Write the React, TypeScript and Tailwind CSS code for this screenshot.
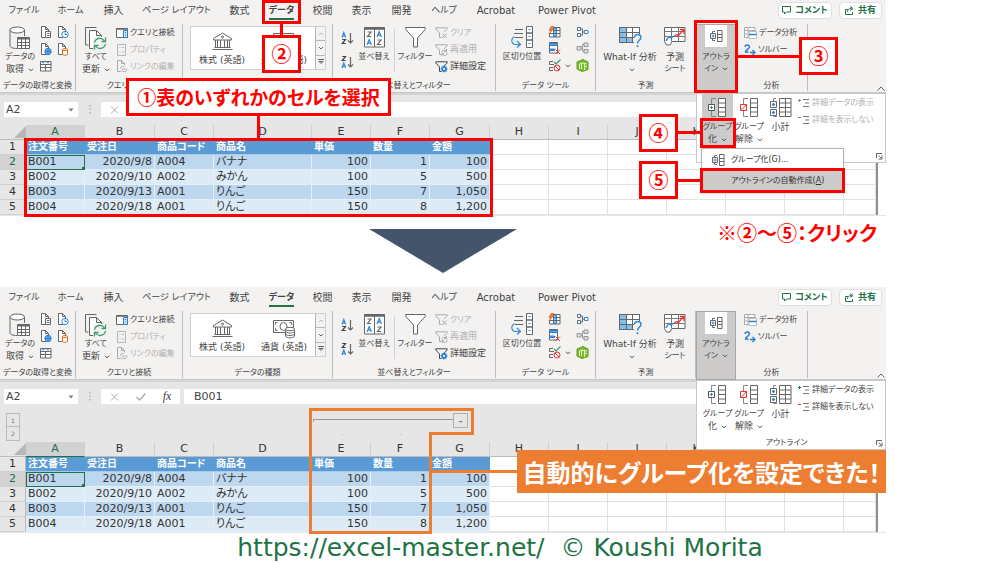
import type { ReactNode } from "react"

const tabs = [
  { label: "ファイル", width: "w-[48px]" },
  { label: "ホーム", width: "w-[45px]" },
  { label: "挿入", width: "w-[41px]" },
  { label: "ページ レイアウト", width: "w-[85px]" },
  { label: "数式", width: "w-[41px]" },
  { label: "データ", width: "w-[43px]", active: true },
  { label: "校閲", width: "w-[39px]" },
  { label: "表示", width: "w-[39px]" },
  { label: "開発", width: "w-[41px]" },
  { label: "ヘルプ", width: "w-[44px]" },
  { label: "Acrobat", width: "w-[60px]" },
  { label: "Power Pivot", width: "w-[82px]" },
]

const columns = ["A", "B", "C", "D", "E", "F", "G", "H", "I", "J", "K", "L", "M", ""]

const headings = ["注文番号", "受注日", "商品コード", "商品名", "単価", "数量", "金額"]

const orders = [
  ["B001", "2020/9/8", "A004", "バナナ", "100", "1", "100"],
  ["B002", "2020/9/10", "A002", "みかん", "100", "5", "500"],
  ["B003", "2020/9/13", "A001", "りんご", "150", "7", "1,050"],
  ["B004", "2020/9/18", "A001", "りんご", "150", "8", "1,200"],
]

const rightAligned = [1, 4, 5, 6]

// kana labels are set one size smaller than kanji ones
const hasKana = (text: string) => /[ぁ-んァ-ヶ]/.test(text)

/* ---------- icons ---------- */

function Svg({ w, h, children }: { w: number; h: number; children: ReactNode }) {
  return (
    <svg width={w} height={h} viewBox={`0 0 ${w} ${h}`} fill="none" stroke="#666" strokeWidth="1" className="block shrink-0" aria-hidden="true">
      {children}
    </svg>
  )
}

function Chevron() {
  return (
    <svg width="6" height="4" viewBox="0 0 6 4" fill="none" stroke="#444" className="ml-1 inline-block align-middle" aria-hidden="true">
      <path d="M1 .8 3 2.8 5 .8" />
    </svg>
  )
}

function DatabaseIcon() {
  return (
    <Svg w={22} h={25}>
      <path d="M1 4v16c0 1.500 3 2.500 7 2.500M15.500 4v6" />
      <ellipse cx="8.200" cy="4" rx="7.300" ry="3" fill="#fff" />
      <path d="M8.500 11.500h12v11h-12z" fill="#fff" />
      <path d="M8.500 12.500h12" strokeWidth="2" />
      <path d="M8.500 16.500h12M8.500 19.500h12M12.500 13v10M16.500 13v10" />
    </Svg>
  )
}

function PageIcon({ kind }: { kind: "text" | "clock" | "web" | "db" }) {
  return (
    <Svg w={12} h={13}>
      <path d="M6 11.500H1.500V.5h4l3 3V6M5.500.5v3h3" fill="#fff" />
      {kind === "text" && (
        <>
          <path d="M5.500 5.500h5v6h-5z" fill="#fff" />
          <path d="M7 7.500h2.500M7 9.500h2.500" />
        </>
      )}
      {kind === "clock" && (
        <g stroke="#2b88d8">
          <circle cx="8" cy="8.500" r="3.200" fill="#fff" />
          <path d="M8 6.500v2h2" />
        </g>
      )}
      {kind === "web" && (
        <g stroke="#2b7cd3">
          <circle cx="8" cy="8.500" r="3.200" fill="#71afe5" />
          <path d="M5 8.500h6M8 5.500v6" />
        </g>
      )}
      {kind === "db" && (
        <g stroke="#e8681a">
          <path d="M5.500 6.500v5c1 1 4 1 5 0v-5" fill="#fff" />
          <ellipse cx="8" cy="6.500" rx="2.500" ry="1" fill="#fff" />
        </g>
      )}
    </Svg>
  )
}

function TableIcon() {
  return (
    <Svg w={12} h={12}>
      <path d="M.5 1.500h10.500v9.500H.5z" fill="#fff" />
      <path d="M.5 4.500H11M.5 7.500H11M5.500 4v7" />
      <path d="M2 2.500h2.500M6.500 2.500H9" stroke="#41a5ee" strokeWidth="1.500" />
    </Svg>
  )
}

function RefreshAllIcon() {
  return (
    <Svg w={22} h={25}>
      <path d="M3.500 19H.5V1.500h11" />
      <path d="M8 22.500H4.500v-18h7l5 5V12M11.500 4.500v5h5" fill="#fff" />
      <path d="M8 11h13v13H8z" fill="#f3f2f1" stroke="none" />
      <path d="M9.500 16.500a5.500 5.500 0 0 1 10-1.500M20.500 18a5.500 5.500 0 0 1-10 2" stroke="#3a9b6b" strokeWidth="1.300" />
      <path d="M20.500 11.500v4h-4M9.500 23.500v-4h4" stroke="#3a9b6b" strokeWidth="1.300" />
    </Svg>
  )
}

function QueryIcon() {
  return (
    <Svg w={12} h={12}>
      <path d="M.5 1.500h11v9H.5z" fill="#fff" />
      <path d="M.5 2h11" strokeWidth="1.500" />
      <path d="M7.500 3.500h4v7h-4z" fill="#cfe6f9" stroke="#2b7cd3" />
      <path d="M9 5.500h1M9 8h1" stroke="#2b7cd3" />
    </Svg>
  )
}

function PropertyIcon() {
  return (
    <Svg w={12} h={12}>
      <path d="M1.500.5h8v11h-8zM3.500 3.500h1M3.500 8h1M6 3.500h2M6 8h2" stroke="#b5b5b5" />
    </Svg>
  )
}

function LinkIcon() {
  return (
    <Svg w={12} h={13}>
      <g stroke="#aaa">
        <path d="M4 11.500H1.500V.5h4l3 3v2M5.500.5v3h3" />
        <path d="M4.500 8.500a2 2 0 0 1 2-2h1M10.500 8.500a2 2 0 0 1-2 3h-2M6 9h3.500M4.500 12l1-1.500" />
      </g>
    </Svg>
  )
}

function BankIcon() {
  return (
    <Svg w={21} h={19}>
      <path d="M1.500 6.500 10.500 1l9 5.500v1.500h-18z" fill="#fff" />
      <circle cx="10.500" cy="5" r="1" />
      <path d="M3.500 8v7M5.500 8v7M8.500 8v7M12.500 8v7M15.500 8v7M17.500 8v7M2.500 15.500h16M.5 17.500h20" />
    </Svg>
  )
}

function MoneyIcon() {
  return (
    <Svg w={23} h={20}>
      <path d="M.5 1.500h20v12H.5z" fill="#fff" />
      <path d="M2.500 5.500v-2h2M16.500 3.500h2v2M2.500 9.500v2h2" />
      <ellipse cx="10.500" cy="7.500" rx="3.500" ry="4" />
      <path d="M12.500 10v7c1 2.500 8 2.500 9 0v-7" fill="#fff" />
      <ellipse cx="17" cy="10" rx="4.500" ry="1.700" fill="#fff" />
      <path d="M12.500 12.500c1 2 8 2 9 0M12.500 15c1 2 8 2 9 0" />
    </Svg>
  )
}

function SortIcon({ desc = false }: { desc?: boolean }) {
  return (
    <Svg w={13} h={14}>
      {desc ? (
        <>
          <path d="M1.200 1.500h3.300l-3.300 4h3.500" stroke="#444" strokeWidth="1.200" />
          <path d="M1 13 2.800 8 4.600 13M1.500 11.500h2.600" stroke="#2b88d8" strokeWidth="1.200" />
        </>
      ) : (
        <>
          <path d="M1 6.500 2.800 1.500 4.600 6.500M1.500 5h2.600" stroke="#2b88d8" strokeWidth="1.200" />
          <path d="M1.200 8.500h3.300l-3.300 4h3.500" stroke="#444" strokeWidth="1.200" />
        </>
      )}
      <path d="M9.500 2v10M7 9.500 9.500 12 12 9.500" strokeWidth="1.200" />
    </Svg>
  )
}

function SortDialogIcon() {
  return (
    <Svg w={21} h={22}>
      <path d="M.5 1.500h20v19.500H.5z" fill="#fff" />
      <path d="M.5 2.500h20" strokeWidth="2.500" />
      <path d="M10.500 3v18" />
      <path d="M3.500 6h3.500l-3.500 4.500H7M13.500 14H17l-3.500 4.500H17" strokeWidth="1.200" />
      <path d="m3 19 2.200-5.500L7.400 19M4 17.200h2.500M13 11l2.200-5.500L17.400 11M14 9.200h2.500" stroke="#2b88d8" strokeWidth="1.200" />
    </Svg>
  )
}

function FilterIcon() {
  return (
    <Svg w={21} h={22}>
      <path d="M.8 1.500h19.400v2l-7.700 8.500v9h-4v-9L.8 3.500z" fill="#fff" />
    </Svg>
  )
}

function SmallFilterIcon({ kind }: { kind: "clear" | "again" | "advanced" }) {
  const color = kind === "advanced" ? "#444" : "#aaa"
  return (
    <Svg w={13} h={12}>
      <path d="M6.500 10.500h-2V6L.8 2V.8h11.400V2L9 5" stroke={color} />
      {kind === "clear" && <path d="m7.500 6.500 4 4.500M11.500 6.500l-4 4.500" stroke="#aaa" />}
      {kind === "again" && <path d="M7 8.500a2.300 2.300 0 0 1 4-1.500M12 8.500a2.300 2.300 0 0 1-4.500 1.200M11.500 5v2.500H9M7 12V9.500h2" stroke="#aaa" />}
      {kind === "advanced" && (
        <g stroke="#2b7cd3">
          <circle cx="9" cy="8" r="2" fill="#fff" strokeWidth="1.800" />
          <path d="M9 4.500v1.200M9 10.300v1.200M5.500 8h1.200M11.300 8h1.200M6.600 5.600l.8.8M10.600 9.600l.8.8M11.400 5.600l-.8.8M7.400 9.600l-.8.8" />
        </g>
      )}
    </Svg>
  )
}

function TextToColumnsIcon() {
  return (
    <Svg w={23} h={22}>
      <path d="M4 3.500h8M3 7.500h9M4 11.500h8" />
      <path d="M15.500.5h6v6.500h-6zM15.500 7h6v7h-6zM15.500 14h6v7.500h-6z" fill="#fff" />
      <path d="M17.500 3.500h2M17.500 10.500h2M17.500 17.500h2" stroke="#2b88d8" />
      <path d="M3.500 10.500C-1 13 .5 18.500 5 18.500h4M6 15 9.500 18.500 6 21.500" stroke="#2b88d8" strokeWidth="1.200" />
    </Svg>
  )
}

function FlashFillIcon() {
  return (
    <Svg w={13} h={12}>
      <path d="M4.500 1.500h7.500v9.500H1.500V7" fill="#fff" />
      <path d="M5.500 2h3v8.500h-3z" fill="#83beec" stroke="#2b7cd3" />
      <path d="M1.500 7.500h10.500M5 4.500h7" />
      <path d="M3 .5 1 4.500h2L1 8l4.500-5H3.800L6 .5z" fill="#f5821f" stroke="#d8581c" strokeWidth=".6" />
    </Svg>
  )
}

function DuplicatesIcon() {
  return (
    <Svg w={13} h={13}>
      <path d="M1.500.5h8v10.500h-8z" fill="#fff" />
      <path d="M1.500 1.500h8v2h-8zM1.500 7h5v1.500h-5z" fill="#5ea9e6" stroke="#2b7cd3" />
      <path d="m7.500 7.500 4.500 4.500M12 7.500 7.500 12" stroke="#e33" />
    </Svg>
  )
}

function ValidationIcon() {
  return (
    <Svg w={13} h={13}>
      <path d="M5 2.500H1.500v3H6M5 8.500H1.500v3H5" />
      <path d="m6 3 2 2 4.500-4.500" stroke="#3a9b6b" strokeWidth="1.200" />
      <circle cx="9" cy="9" r="3" stroke="#e33" fill="#fff" />
      <path d="m7 7 4 4" stroke="#e33" />
    </Svg>
  )
}

function ConsolidateIcon() {
  return (
    <Svg w={13} h={12}>
      <path d="M1.500 1.500h3v3h-3zM1.500 7.500h3v3h-3z" fill="#fff" />
      <path d="M4.500 3H6.500v6h-2M6.500 6h2" />
      <path d="M8.500 4.500h3.500v3H8.500z" fill="#fff" stroke="#2b88d8" />
      <path d="M1 1.500h4M1 10.500h4" stroke="#2b88d8" />
    </Svg>
  )
}

function RelationIcon() {
  return (
    <Svg w={13} h={12}>
      <g stroke="#999" fill="#ddd">
        <path d="M1 4.500h4v3.500H1zM8 1h4v3.500H8zM8 7.500h4V11H8z" />
        <path d="M5 6h1.500V2.500H8M6.500 6v3H8" fill="none" />
      </g>
    </Svg>
  )
}

function DataModelIcon() {
  return (
    <Svg w={13} h={13}>
      <path d="m1 3 6-2.500L12 3v7.500L6 12.500 1 10z" fill="#7dbb2d" stroke="#5e9b1b" />
      <path d="M3.500 10V5l2-1v6M8.500 4v7M6 4l5 1M8.500 7.500H11" stroke="#e4f2d0" />
    </Svg>
  )
}

function WhatIfIcon() {
  return (
    <Svg w={23} h={22}>
      <path d="M.5 1.500h20v15H.5z" fill="#fff" />
      <path d="M1 2h6v14.500H1zM7.500 11.500h6v5h-6z" fill="#83beec" stroke="none" />
      <path d="M.5 1.500h20v15H.5zM.5 6.500h20M.5 11.500h20M7.500 1.500v15M13.500 1.500v15" />
      <path d="M15 8h8v14h-8z" fill="#f3f2f1" stroke="none" />
      <path d="M15.500 11.500c0-4 6.500-4 6.500 0 0 3-3.500 2.500-3.500 6" stroke="#2b88d8" strokeWidth="1.400" />
      <circle cx="18.500" cy="20.300" r="1" fill="#2b88d8" stroke="none" />
    </Svg>
  )
}

function ForecastIcon() {
  return (
    <Svg w={22} h={20}>
      <path d="M.5 1.500h20.500v14H8l-2 3.500H2.500l-2-3.500z" fill="#fff" />
      <path d="M.5 5.500h20.500M.5 10.500h20.500M7.500 1.500v14M14.500 1.500v14" stroke="#777" />
      <path d="M2 15c2-4 3-5 5-3l3-2" stroke="#2b88d8" strokeWidth="1.400" />
      <path d="m10 10 3-1.500 1 1.500L19.500 4M16 3.500h4V8" stroke="#e33" strokeWidth="1.300" />
    </Svg>
  )
}

function OutlineSmallIcon() {
  return (
    <Svg w={13} h={12}>
      <path d="M5 1.500H2.500V3M5 10.500H2.500V9" />
      <path d="M.5 3.500h5v5h-5zM7.500.5h4.500v11H7.500zM7.500 4.500h4.500M7.500 7.500h4.500" fill="#fff" />
      <path d="M3 4.500v3M1.500 6h3" stroke="#2b7cd3" />
    </Svg>
  )
}

function GroupIcon({ ungroup = false }: { ungroup?: boolean }) {
  return (
    <Svg w={19} h={20}>
      <path d="M8 .5H3.500V6M8 18.500H3.500V13" stroke="#888" />
      <path d="M10.500.5h7v18h-7zM10.500 5h7M10.500 9.500h7M10.500 14h7" fill="#fff" />
      <path d="M.5 6.500H6.500v6H.5z" fill="#fff" stroke={ungroup ? "#e33" : "#555"} />
      {ungroup ? <path d="m1 12.500 5.500-6" stroke="#e33" /> : <path d="M3.500 8v3M2 9.500h3" stroke="#2b7cd3" />}
    </Svg>
  )
}

function SubtotalIcon() {
  return (
    <Svg w={22} h={20}>
      <path d="M6 .5H3.500V3M3.500 18.500H7" stroke="#888" />
      <path d="M9.500.5h11.500v18H9.500zM9.500 5H21M9.500 9.500H21M9.500 14H21M15.500.5v18" fill="#fff" />
      <path d="M.5 3.500h6v6h-6zM.5 11.500h6v6h-6z" fill="#fff" />
      <path d="M3.500 5v3M2 6.500h3M3.500 13v3M2 14.500h3" stroke="#2b7cd3" strokeWidth="1.300" />
    </Svg>
  )
}

function DetailIcon({ color, minus = false }: { color: string; minus?: boolean }) {
  return (
    <Svg w={12} h={10}>
      <path d={minus ? "M0 2.500h3" : "M0 2.500h3M1.500 1v3"} stroke={color} />
      <path d="M5 1.500h6M7 5h4M5 8.500h6" stroke="#777" />
    </Svg>
  )
}

function AnalysisIcon() {
  return (
    <Svg w={13} h={12}>
      <path d="M.5.5h10.500v10H.5zM.5 3.500H11M.5 7H4M4 .5v10" stroke="#aaa" fill="#fff" />
      <path d="M5 4.500h7.500v7H5z" fill="#fff" stroke="#bbb" />
      <path d="M5 7.500h7.500" stroke="#2b7cd3" strokeWidth="1.500" />
    </Svg>
  )
}

function SolverIcon() {
  return (
    <Svg w={12} h={12}>
      <path d="M1 3c0-3 4.500-2.500 4.500 0 0 2-4 2.500-4 5h3" stroke="#2b7cd3" strokeWidth="1.500" />
      <path d="M6 8.500h5M8.500 6 11 8.500 8.500 11" stroke="#2b7cd3" strokeWidth="1.300" />
    </Svg>
  )
}

function LauncherIcon() {
  return (
    <Svg w={7} h={7}>
      <path d="M.5 5V.5H6M2.500 2.500l3 3M6 2.500v3.500H2.500" />
    </Svg>
  )
}

/* ---------- ribbon ---------- */

function Group({ width, label, children }: { width: string; label: string; children: ReactNode }) {
  return (
    <div className={`${width} flex h-[67px] shrink-0 flex-col border-r border-[#bdbdbd]`}>
      <div className="flex h-[57px] items-start">{children}</div>
      <div className="text-center text-[8px] leading-[10px]">{label}</div>
    </div>
  )
}

function BigButton({ icon, width, lines, arrow = false }: { icon: ReactNode; width: string; lines: string[]; arrow?: boolean }) {
  return (
    <button type="button" className={`${width} flex shrink-0 flex-col items-center pt-[2px] leading-[12px]`}>
      <span className="flex h-[25px] items-start">{icon}</span>
      {lines.map((line, i) => (
        <span key={i} className={hasKana(line) ? "text-[8px]" : "text-[9px]"}>
          {line}
          {arrow && i === lines.length - 1 && <Chevron />}
        </span>
      ))}
    </button>
  )
}

function RowButton({ icon, label, muted = false }: { icon: ReactNode; label: string; muted?: boolean }) {
  return (
    <button type="button" className={`flex h-[17px] items-center gap-[2px] ${hasKana(label) ? "text-[8px]" : "text-[9px]"} ${muted ? "text-[#b0b0b0]" : ""}`}>
      {icon}
      {label}
    </button>
  )
}

function Ribbon() {
  return (
    <div className="h-[93px] border-b border-[#c8c8c8] bg-[#f3f2f1] text-[#444]">
      <div className="flex h-[24px] items-start">
        {tabs.map((tab) => (
          <button
            key={tab.label}
            type="button"
            className={`${tab.width} flex shrink-0 justify-center pt-[3px] leading-[15px] ${hasKana(tab.label) ? "text-[9px]" : "text-[10px]"}`}
          >
            <span className={tab.active ? "border-b-2 border-[#217346] font-bold" : ""}>{tab.label}</span>
          </button>
        ))}
        <div className="ml-auto flex gap-[7px] pt-[2px] pr-1 text-[9px] leading-[15px] font-bold text-[#217346]">
          <button type="button" className="flex w-[54px] items-center justify-center gap-1 rounded-sm border border-[#e1dfdd] bg-white">
            <Svg w={9} h={9}>
              <path d="M.5.500h8v5.500h-4L2.500 8V6h-2z" stroke="#217346" />
            </Svg>
            コメント
          </button>
          <button type="button" className="flex w-[43px] items-center justify-center gap-1 rounded-sm border border-[#e1dfdd] bg-white">
            <Svg w={9} h={9}>
              <path d="M3 3.500H.5v5h7V6M2.500 6c0-2.500 1.500-3.500 4-3.500M5 .5l3 2-3 2" stroke="#217346" />
            </Svg>
            共有
          </button>
        </div>
      </div>

      <div className="flex">
        <Group width="w-[76px]" label="データの取得と変換">
          <BigButton icon={<DatabaseIcon />} width="w-[40px]" lines={["データの", "取得"]} arrow />
          <div className="grid grid-cols-2 gap-x-[5px] gap-y-[4px] pt-[2px]">
            <PageIcon kind="text" />
            <PageIcon kind="clock" />
            <PageIcon kind="web" />
            <PageIcon kind="db" />
            <TableIcon />
          </div>
        </Group>

        <Group width="w-[107px]" label="クエリと接続">
          <BigButton icon={<RefreshAllIcon />} width="w-[40px]" lines={["すべて", "更新"]} arrow />
          <div>
            <RowButton icon={<QueryIcon />} label="クエリと接続" />
            <RowButton icon={<PropertyIcon />} label="プロパティ" muted />
            <RowButton icon={<LinkIcon />} label="リンクの編集" muted />
          </div>
        </Group>

        <Group width="w-[150px]" label="データの種類">
          <div className="mt-[2px] ml-[7px] flex h-[44px] border border-[#d0d0d0] bg-white">
            <button type="button" className="flex w-[62px] flex-col items-center pt-[5px] text-[9px] leading-[14px]">
              <span className="h-[21px]"><BankIcon /></span>
              株式 (英語)
            </button>
            <button type="button" className="flex w-[62px] flex-col items-center pt-[5px] text-[9px] leading-[14px]">
              <span className="h-[21px]"><MoneyIcon /></span>
              通貨 (英語)
            </button>
            <div className="flex w-[10px] flex-col divide-y divide-[#b5b5b5] border-l border-[#b5b5b5] bg-[#f3f2f1]">
              <button type="button" aria-label="上へ" className="flex flex-1 items-center justify-center">
                <Svg w={6} h={4}><path d="M1 3 3 1 5 3" stroke="#bbb" /></Svg>
              </button>
              <button type="button" aria-label="下へ" className="flex flex-1 items-center justify-center">
                <Svg w={6} h={4}><path d="M1 1 3 3 5 1" /></Svg>
              </button>
              <button type="button" aria-label="その他" className="flex flex-1 items-center justify-center">
                <Svg w={6} h={6}><path d="M0 .5h6M1 2.500 3 4.500 5 2.500z" /></Svg>
              </button>
            </div>
          </div>
        </Group>

        <Group width="w-[163px]" label="並べ替えとフィルター">
          <div className="flex flex-col gap-[10px] pt-[7px] pl-2">
            <SortIcon />
            <SortIcon desc />
          </div>
          <BigButton icon={<SortDialogIcon />} width="w-[40px]" lines={["並べ替え"]} />
          <div className="mt-[5px] h-[43px] border-l border-[#d0d0d0]" />
          <BigButton icon={<FilterIcon />} width="w-[40px]" lines={["フィルター"]} />
          <div>
            <RowButton icon={<SmallFilterIcon kind="clear" />} label="クリア" muted />
            <RowButton icon={<SmallFilterIcon kind="again" />} label="再適用" muted />
            <RowButton icon={<SmallFilterIcon kind="advanced" />} label="詳細設定" />
          </div>
        </Group>

        <Group width="w-[100px]" label="データ ツール">
          <BigButton icon={<TextToColumnsIcon />} width="w-[52px]" lines={["区切り位置"]} />
          <div className="grid grid-cols-[28px_13px] gap-y-[4px] pt-[2px]">
            <FlashFillIcon />
            <ConsolidateIcon />
            <DuplicatesIcon />
            <RelationIcon />
            <span className="flex items-center">
              <ValidationIcon />
              <Chevron />
            </span>
            <DataModelIcon />
          </div>
        </Group>

        <Group width="w-[100px]" label="予測">
          <BigButton icon={<WhatIfIcon />} width="w-[68px]" lines={["What-If 分析", ""]} arrow />
          <BigButton icon={<ForecastIcon />} width="w-[22px]" lines={["予測", "シート"]} />
        </Group>

        <button type="button" className="flex h-[69px] w-[40px] shrink-0 flex-col items-center border border-[#a6a6a6] bg-[#cdcbca] text-[8px] leading-[12px]">
          <span className="mb-[4px] flex h-[22px] w-[22px] shrink-0 items-center justify-center bg-white">
            <OutlineSmallIcon />
          </span>
          <span>アウトラ</span>
          <span>イン<Chevron /></span>
        </button>

        <Group width="w-[72px]" label="分析">
          <div className="pl-2">
            <RowButton icon={<AnalysisIcon />} label="データ分析" />
            <RowButton icon={<SolverIcon />} label="ソルバー" />
          </div>
        </Group>

        <button type="button" aria-label="リボンを折りたたむ" className="mt-[61px] mr-[1px] ml-auto h-[6px]">
          <Svg w={8} h={5}><path d="M.5 4.500 4 1l3.500 3.500" /></Svg>
        </button>
      </div>
    </div>
  )
}

function FormulaBar() {
  return (
    <div className="flex border-t-2 border-[#d5d5d5] pt-[7px] pb-2 pl-1 text-[#444]">
      <div className="flex h-[15px] w-[74px] items-center bg-white pr-1">
        <input aria-label="名前ボックス" defaultValue="A2" className="w-full min-w-0 pl-[2px] text-[11px] leading-[15px] outline-none" />
        <Svg w={6} h={4}><path d="M.5.500h5L3 3.500z" fill="#777" stroke="none" /></Svg>
      </div>
      <div className="flex w-[23px] items-center justify-center">
        <Svg w={2} h={9}><path d="M1 0v9" stroke="#999" strokeDasharray="1.500 2" /></Svg>
      </div>
      <div className="flex h-[15px] w-[79px] items-center justify-around bg-white">
        <button type="button" aria-label="キャンセル">
          <Svg w={9} h={8}><path d="m1 .5 7 7M8 .500l-7 7" stroke="#aaa" /></Svg>
        </button>
        <button type="button" aria-label="入力">
          <Svg w={10} h={8}><path d="m.5 4 3 3 6-6.500" stroke="#aaa" strokeWidth="1.400" /></Svg>
        </button>
        <button type="button" className="font-['Liberation_Serif',serif] text-[12px] leading-[15px] italic">fx</button>
      </div>
      <input aria-label="数式バー" defaultValue="B001" className="ml-1 h-[15px] min-w-0 flex-1 bg-white pl-[10px] text-[11px] leading-[15px] outline-none" />
    </div>
  )
}

function OutlineBar() {
  return (
    <div className="flex h-[30px] items-start pt-[1px] pl-[6px] text-[6px] text-[#777]">
      <div className="flex w-[14px] flex-col">
        <button type="button" className="h-[14px] border border-[#bbb]">1</button>
        <button type="button" className="h-[14px] border border-t-0 border-[#bbb]">2</button>
      </div>
      <div className="ml-[293px] w-[140px]">
        <div className="mt-[6px] h-[3px] border-t border-l border-[#999]" />
        <div className="flex gap-[57px] pt-[9px] pl-[28px] leading-[4px]">
          <span>.</span>
          <span>.</span>
        </div>
      </div>
      <button type="button" className="h-[15px] w-[15px] border border-[#b0b0b0] text-[9px] leading-[12px] font-bold">-</button>
    </div>
  )
}

function Sheet() {
  return (
    <div className="flex bg-white">
      <table className="w-full table-fixed border-separate border-spacing-0 border-r-2 border-[#8f8f8f] text-[11px] leading-[14px] text-[#333]">
        <colgroup>
          <col className="w-[26px]" />
          <col className="w-[59px]" />
          <col className="w-[70px]" />
          <col className="w-[59px]" />
          <col className="w-[98px]" />
          <col className="w-[59px]" />
          <col className="w-[59px]" />
          <col className="w-[60px]" />
          <col className="w-[59px]" />
          <col className="w-[59px]" />
          <col className="w-[59px]" />
          <col className="w-[59px]" />
          <col className="w-[59px]" />
          <col className="w-[59px]" />
          <col />
        </colgroup>
        <thead>
          <tr className="h-[15px] bg-[#e6e6e6]">
            <th className="border-b border-[#bbb] p-0">
              <svg width="12" height="12" viewBox="0 0 12 12" className="ml-auto" aria-hidden="true">
                <path d="M12 0v12H0z" fill="#b7b7b7" />
              </svg>
            </th>
            {columns.map((name, i) => (
              <th
                key={i}
                className={`border-r border-b border-r-[#cfcfcf] p-0 font-normal ${name === "A" ? "border-b-[#217346] bg-[#d2d2d2] text-[#217346]" : "border-b-[#bbb]"}`}
              >
                {name}
              </th>
            ))}
          </tr>
        </thead>
        <tbody>
          {[headings, ...orders].map((row, r) => (
            <tr key={r} className="h-[15px]">
              <th
                className={`border-r border-b border-r-[#bbb] border-b-[#cfcfcf] p-0 font-normal ${r === 1 ? "bg-[#d2d2d2] text-[#217346]" : "bg-[#e6e6e6]"}`}
              >
                {r + 1}
              </th>
              {columns.map((_, c) => {
                if (c >= row.length) {
                  return <td key={c} className="border-r border-b border-[#e1e1e1] p-0" />
                }
                if (r === 0) {
                  return (
                    <td key={c} className="border-b border-[#a8cbea] bg-[#5b9bd5] py-0 pl-[2px] text-[10px] font-bold whitespace-nowrap text-white">
                      {row[c]}
                    </td>
                  )
                }
                const selected = r === 1 && c === 0
                return (
                  <td
                    key={c}
                    className={`relative border-r border-b border-[#e6f0f9] px-[2px] py-0 whitespace-nowrap ${r % 2 ? "bg-[#bdd7ee]" : "bg-[#ddebf7]"} ${rightAligned.includes(c) ? "text-right" : ""} ${selected ? "outline outline-1 -outline-offset-1 outline-[#217346]" : ""}`}
                  >
                    {row[c]}
                    {selected && <span className="absolute -right-px -bottom-px h-[3px] w-[3px] bg-[#217346]" />}
                  </td>
                )
              })}
            </tr>
          ))}
        </tbody>
      </table>
      <div className="w-[8px] shrink-0" />
    </div>
  )
}

/* the outline group of the ribbon, opened below its button */
function OutlinePopup({ pressed = false }: { pressed?: boolean }) {
  return (
    <div className="absolute top-[93px] right-0 left-[696px] flex h-[70px] flex-col border border-[#c8c8c8] bg-white text-[#444]">
      <div className="flex flex-1">
        <div className={`ml-[5px] flex h-[54px] ${pressed ? "bg-[#cdcbca]" : ""}`}>
          <BigButton icon={<span className="pt-[2px]"><GroupIcon /></span>} width="w-[31px]" lines={["グループ", "化"]} arrow />
        </div>
        <BigButton icon={<span className="pt-[2px]"><GroupIcon ungroup /></span>} width="w-[32px]" lines={["グループ", "解除"]} arrow />
        <BigButton icon={<span className="pt-[2px]"><SubtotalIcon /></span>} width="w-[31px]" lines={["小計"]} />
        <div className="ml-[2px]">
          <RowButton icon={<DetailIcon color={pressed ? "#888" : "#217346"} />} label="詳細データの表示" muted={pressed} />
          <RowButton icon={<DetailIcon color={pressed ? "#888" : "#e33"} minus />} label="詳細を表示しない" muted={pressed} />
        </div>
      </div>
      <div className="flex h-[12px] items-center justify-end text-[8px] leading-[12px]">
        {!pressed && <span className="flex-1 text-center">アウトライン</span>}
        <button type="button" aria-label="アウトラインの設定" className="mr-[2px]"><LauncherIcon /></button>
      </div>
    </div>
  )
}

function GroupMenu() {
  return (
    <div className="absolute top-[148px] left-[701px] w-[143px] border border-[#b5b5b5] bg-white text-[8px] text-[#333] shadow-sm">
      <button type="button" className="flex h-[21px] w-full items-center gap-[6px] pl-[10px]">
        <OutlineSmallIcon />
        <span>グループ化(G)...</span>
      </button>
      <button type="button" className="flex h-[22px] w-full items-center bg-[#cdcbca] pl-[29px]">
        <span>アウトラインの自動作成(<u>A</u>)</span>
      </button>
    </div>
  )
}

function Frame({ place }: { place: string }) {
  return <div className={`absolute border-[3px] border-[#ff0000] ${place}`} />
}

function Wire({ place }: { place: string }) {
  return <div className={`absolute bg-[#ff0000] ${place}`} />
}

function Step({ place, children }: { place: string; children: ReactNode }) {
  return (
    <div
      className={`absolute flex h-[38px] w-[39px] items-center justify-center border-[3px] border-[#ff0000] bg-white font-['Noto_Sans_CJK_JP',sans-serif] text-[20px] leading-[20px] font-bold text-[#ff0000] ${place}`}
    >
      {children}
    </div>
  )
}

export default function App() {
  return (
    <div className="overflow-hidden bg-white font-['DejaVu_Sans','Noto_Sans_CJK_JP',sans-serif] whitespace-nowrap [font-feature-settings:'palt']">
      <div className="pr-[114px]">
        <section className="relative bg-[#e6e6e6] pb-px">
          <Ribbon />
          <FormulaBar />
          <Sheet />
          <OutlinePopup pressed />
          <GroupMenu />

          <Wire place="top-[24px] left-[280px] h-[11px] w-[3px]" />
          <Frame place="top-0 left-[262px] h-[24px] w-[39px]" />
          <Step place="top-[35px] left-[262px]">②</Step>

          <Wire place="top-[115px] left-[257px] h-[24px] w-[3px]" />
          <Frame place="top-[138px] left-[24px] h-[79px] w-[469px]" />
          <div className="absolute top-[78px] left-[126px] flex h-[38px] w-[265px] items-center justify-center border-[3px] border-[#ff0000] bg-white font-['Noto_Sans_CJK_JP',sans-serif] text-[19px] leading-[24px] font-bold text-[#ff0000]">
            ①表のいずれかのセルを選択
          </div>

          <Wire place="top-[55px] left-[737px] h-[3px] w-[64px]" />
          <Frame place="top-[20px] left-[694px] h-[73px] w-[44px]" />
          <Step place="top-[37px] left-[799px]">③</Step>

          <Wire place="top-[131px] left-[677px] h-[3px] w-[25px]" />
          <Frame place="top-[118px] left-[700px] h-[30px] w-[36px]" />
          <Step place="top-[114px] left-[639px]">④</Step>

          <Wire place="top-[179px] left-[677px] h-[3px] w-[25px]" />
          <Frame place="top-[168px] left-[700px] h-[25px] w-[145px]" />
          <Step place="top-[161px] left-[639px]">⑤</Step>
        </section>

        <div className="flex h-[71px] items-start gap-[200px] pl-[369px]">
          <svg width="148" height="44" viewBox="0 0 148 44" className="mt-[13px] shrink-0" aria-hidden="true">
            <path d="M0 0h148L74 44z" fill="#44546a" />
          </svg>
          <p className="mt-[4px] font-['Noto_Sans_CJK_JP',sans-serif] text-[20px] leading-[26px] font-bold text-[#ff0000]">※②～⑤：クリック</p>
        </div>

        <section className="relative bg-[#e6e6e6] pb-px">
          <Ribbon />
          <FormulaBar />
          <OutlineBar />
          <Sheet />
          <OutlinePopup />

          <svg width="210" height="128" viewBox="0 0 210 128" fill="none" stroke="#ed7d31" strokeWidth="3" className="absolute top-[120px] left-[308px]" aria-hidden="true">
            <path d="M2.500 2.500h162v24h-42v99H2.500zM122.500 64.500H210" />
          </svg>
          <div className="absolute top-[163px] right-0 left-[517px] flex h-[43px] items-center justify-center bg-[#ed7d31] font-['Noto_Sans_CJK_JP',sans-serif] text-[24px] leading-[30px] font-bold text-white">
            自動的にグループ化を設定できた！
          </div>
        </section>
      </div>

      <footer className="text-center text-[25px] leading-[30px] text-[#217346]">
        <a href="https://excel-master.net/">https://excel-master.net/</a>
        <span className="ml-4">© Koushi Morita</span>
      </footer>
    </div>
  )
}
